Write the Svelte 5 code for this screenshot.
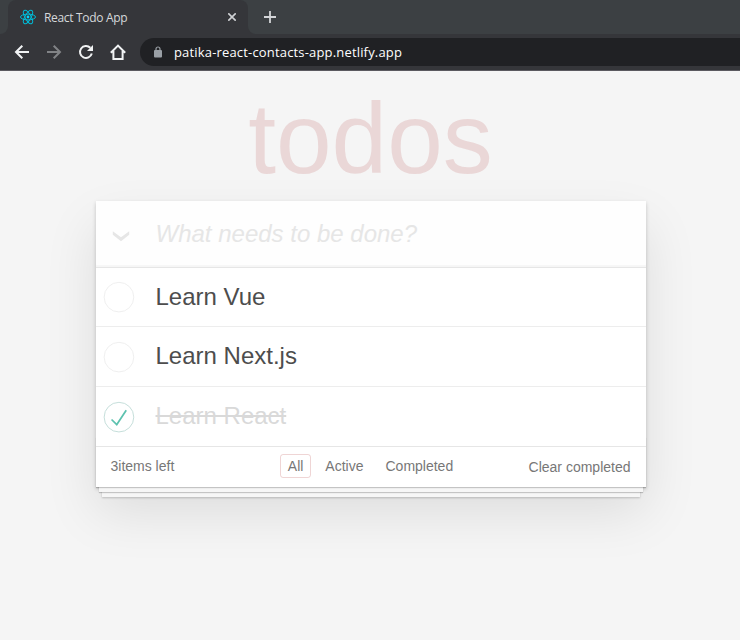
<script>
  let todos = $state([
    { id: 1, title: 'Learn Vue', done: false },
    { id: 2, title: 'Learn Next.js', done: false },
    { id: 3, title: 'Learn React', done: true }
  ]);
  const filters = ['All', 'Active', 'Completed'];
  let filter = $state('All');
  const shown = $derived(
    todos.filter((t) => filter === 'All' || (filter === 'Completed') === t.done)
  );
</script>

<div class="window">
  <header class="chrome">
    <div class="tabs">
      <div class="before"></div>
      <div class="tab">
        <svg class="react" width="16" height="16" viewBox="0 0 16 16" fill="none" stroke="#00bcd8" stroke-width="1">
          <ellipse cx="8" cy="8" rx="7.5" ry="2.9" />
          <ellipse cx="8" cy="8" rx="7.5" ry="2.9" transform="rotate(60 8 8)" />
          <ellipse cx="8" cy="8" rx="7.5" ry="2.9" transform="rotate(120 8 8)" />
          <circle cx="8" cy="8" r="1.4" fill="#00d8ff" stroke="none" />
        </svg>
        <span class="tab-title">React Todo App</span>
        <svg class="close" width="8" height="8" viewBox="0 0 8 8" stroke="#d0d2d5" stroke-width="1.6">
          <path d="M0.3 0.3L7.7 7.7M7.7 0.3L0.3 7.7" />
        </svg>
      </div>
      <div class="after">
        <svg width="12" height="12" viewBox="0 0 12 12" stroke="#d3d5d8" stroke-width="1.8">
          <path d="M6 0V12M0 6H12" />
        </svg>
      </div>
    </div>
    <div class="toolbar">
      <svg width="16" height="16" viewBox="0 0 16 16" fill="none" stroke="#f1f3f4" stroke-width="2">
        <path d="M15 8H2.5M8.3 1.7L2 8L8.3 14.3" />
      </svg>
      <svg width="16" height="16" viewBox="0 0 16 16" fill="none" stroke="#818386" stroke-width="2">
        <path d="M1 8H13.5M7.7 1.7L14 8L7.7 14.3" />
      </svg>
      <svg width="16" height="16" viewBox="0 0 16 16" fill="none" stroke="#f1f3f4" stroke-width="2">
        <path d="M13.8 9.6A6 6 0 1 1 12.3 3.8" />
        <path d="M15 1V7H9Z" fill="#f1f3f4" stroke="none" />
      </svg>
      <svg width="16" height="16" viewBox="0 0 16 16" fill="none" stroke="#f1f3f4" stroke-width="2">
        <path d="M0.8 8.8L8 1.6L15.2 8.8M3.4 7V15H12.6V7" />
      </svg>
      <div class="address">
        <svg width="8" height="12" viewBox="0 0 8 12">
          <path d="M2 5V3A2 2 0 0 1 6 3V5" fill="none" stroke="#9aa0a6" stroke-width="1.2" />
          <rect y="4" width="8" height="7.4" rx="1" fill="#9aa0a6" />
        </svg>
        <span>patika-react-contacts-app.netlify.app</span>
      </div>
    </div>
  </header>

  <main>
    <h1>todos</h1>
    <section class="card">
      <div class="new">
        <svg width="18" height="11" viewBox="0 0 18 11">
          <path d="M0.8 0.2L9 6.2L17.2 0.2V3.8L9 10.2L0.8 3.8Z" fill="#e6e6e6" />
        </svg>
        <input placeholder="What needs to be done?" />
      </div>
      <ul class="list">
        {#each shown as todo (todo.id)}
          <li class:done={todo.done}>
            <svg width="40" height="40" viewBox="-10 -18 100 135" fill="none">
              <circle cx="50" cy="50" r="50" stroke={todo.done ? '#bddad5' : '#ededed'} stroke-width="3" />
              {#if todo.done}
                <path fill="#5dc2af" d="M72 25L42 71 27 56l-4 4 20 20 34-52z" />
              {/if}
            </svg>
            <span>{todo.title}</span>
          </li>
        {/each}
      </ul>
      <footer>
        <span class="count">{todos.length}items left</span>
        <nav>
          {#each filters as name}
            <button class:selected={filter === name} onclick={() => (filter = name)}>{name}</button>
          {/each}
        </nav>
        <button class="clear" onclick={() => (todos = todos.filter((t) => !t.done))}>Clear completed</button>
      </footer>
    </section>
  </main>
</div>

<style>
  :global(body) {
    margin: 0;
    background: #f5f5f5;
  }
  .window {
    height: 640px;
    overflow: hidden;
    background: #f5f5f5;
    font: 14px "Liberation Sans", Arial, sans-serif;
  }
  svg {
    display: block;
    flex: none;
  }
  .chrome {
    height: 71px;
    box-sizing: border-box;
    background: #35363a;
    border-bottom: 1px solid #5b5a60;
    font-family: "Open Sans", "Noto Sans", sans-serif;
  }
  .tabs {
    display: flex;
    height: 34px;
    background: linear-gradient(#3c4043 0 16px, #35363a 16px);
  }
  .before {
    width: 8px;
    background: #3c4043;
    border-bottom-right-radius: 8px;
  }
  .tab {
    display: flex;
    align-items: center;
    width: 240px;
    box-sizing: border-box;
    padding: 0 12px;
    background: #35363a;
    border-radius: 8px 8px 0 0;
  }
  .tab-title {
    margin-left: 8px;
    color: #d6d8db;
    font-size: 12px;
    letter-spacing: -0.32px;
    white-space: nowrap;
  }
  .close {
    margin-left: auto;
  }
  .after {
    flex: 1;
    display: flex;
    align-items: center;
    padding-left: 16px;
    background: #3c4043;
    border-bottom-left-radius: 8px;
  }
  .toolbar {
    display: flex;
    align-items: center;
    gap: 16px;
    height: 36px;
    padding-left: 14px;
  }
  .address {
    flex: 1;
    display: flex;
    align-items: center;
    height: 28px;
    margin-left: -2px;
    padding-left: 14px;
    background: #202124;
    border-radius: 14px 0 0 14px;
  }
  .address span {
    margin-left: 12px;
    color: #fff;
    font-size: 13px;
    letter-spacing: 0.17px;
  }
  main {
    width: 550px;
    margin-left: 95.5px;
  }
  h1 {
    height: 130px;
    margin: 0;
    padding-top: 10px;
    box-sizing: border-box;
    font-size: 100px;
    font-weight: 400;
    line-height: 115px;
    text-align: center;
    color: rgba(175, 47, 47, 0.15);
  }
  .card {
    background: #fff;
    box-shadow: 0 2px 4px rgba(0, 0, 0, 0.2), 0 25px 50px rgba(0, 0, 0, 0.1);
  }
  .new {
    display: flex;
    align-items: center;
    height: 66px;
    box-sizing: border-box;
    padding-left: 16px;
    background: #fefefe;
    box-shadow: inset 0 -2px 1px rgba(0, 0, 0, 0.03);
  }
  .new svg {
    margin-top: 5px;
  }
  input {
    flex: 1;
    min-width: 0;
    margin-left: 26px;
    padding: 0;
    border: 0;
    outline: none;
    background: transparent;
    font: 24px "Liberation Sans", Arial, sans-serif;
    color: #4d4d4d;
  }
  input::placeholder {
    font-style: italic;
    color: #e6e6e6;
    opacity: 1;
  }
  .list {
    margin: 0;
    padding: 0;
    list-style: none;
    border-top: 1px solid #e6e6e6;
  }
  li {
    display: flex;
    align-items: center;
    height: 60px;
    box-sizing: border-box;
    border-bottom: 1px solid #ededed;
    font-size: 24px;
    color: #4d4d4d;
  }
  li:first-child {
    height: 59px;
  }
  li:last-child {
    height: 59px;
    border-bottom: 0;
  }
  li span {
    margin-left: 20px;
  }
  li + li span {
    padding-bottom: 2px;
  }
  .done span {
    color: #d9d9d9;
    text-decoration: line-through;
  }
  footer {
    display: grid;
    grid-template-columns: 1fr auto 1fr;
    align-items: center;
    height: 41px;
    box-sizing: border-box;
    padding: 0 15px;
    border-top: 1px solid #e6e6e6;
    color: #777;
    position: relative;
  }
  footer::before {
    content: "";
    position: absolute;
    inset: auto 0 0;
    height: 50px;
    pointer-events: none;
    box-shadow: 0 1px 1px rgba(0, 0, 0, 0.2), 0 8px 0 -3px #f6f6f6,
      0 9px 1px -3px rgba(0, 0, 0, 0.2), 0 16px 0 -6px #f6f6f6,
      0 17px 2px -6px rgba(0, 0, 0, 0.2);
  }
  .count,
  nav {
    padding-bottom: 2px;
  }
  nav {
    display: flex;
    gap: 6px;
  }
  button {
    height: 24px;
    padding: 0 7px;
    border: 1px solid transparent;
    border-radius: 3px;
    background: none;
    color: #777;
    font: inherit;
  }
  .selected {
    border-color: rgba(175, 47, 47, 0.2);
  }
  .clear {
    justify-self: end;
    padding: 0;
    border: 0;
  }
</style>
